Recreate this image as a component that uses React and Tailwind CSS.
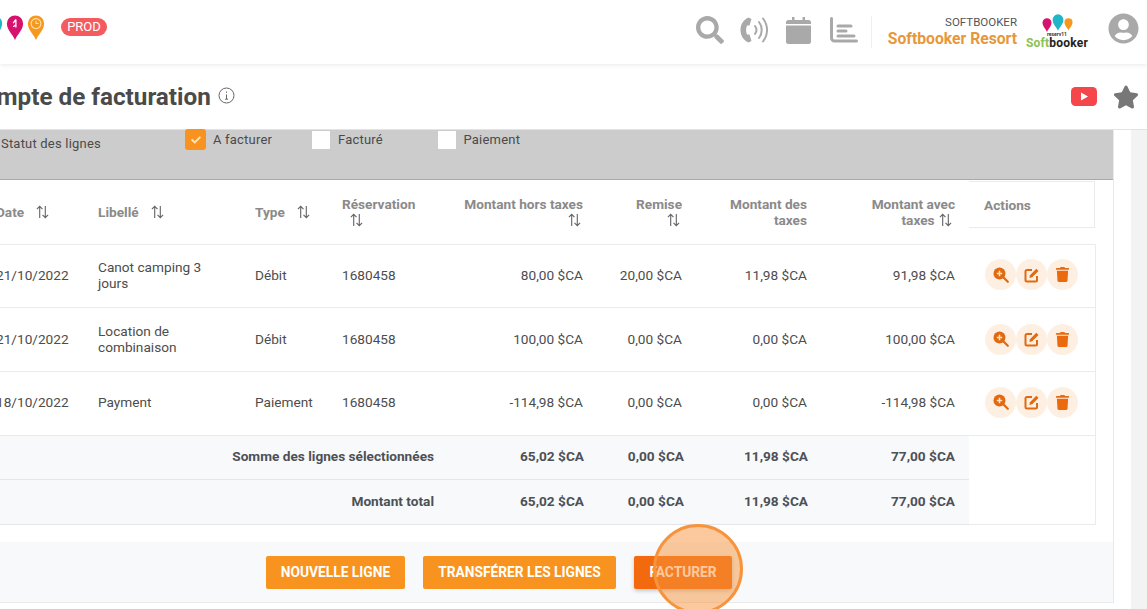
import React from "react";
import { FaSearch, FaUserCircle, FaStar, FaTrash, FaCheck } from "react-icons/fa";

const rows = [
  { date: "21/10/2022", label: "Canot camping 3 jours", type: "Débit", resa: "1680458", ht: "80,00 $CA", remise: "20,00 $CA", taxes: "11,98 $CA", ttc: "91,98 $CA", h: "h-[63px] [&>td]:pb-[2px]" },
  { date: "21/10/2022", label: "Location de combinaison", type: "Débit", resa: "1680458", ht: "100,00 $CA", remise: "0,00 $CA", taxes: "0,00 $CA", ttc: "100,00 $CA", h: "h-[64px]" },
  { date: "18/10/2022", label: "Payment", type: "Paiement", resa: "1680458", ht: "-114,98 $CA", remise: "0,00 $CA", taxes: "0,00 $CA", ttc: "-114,98 $CA", h: "h-[64px] [&>td]:pb-[2px]" },
];

const totals = [
  { label: "Somme des lignes sélectionnées", h: "h-[44px] [&>td]:pb-[2px]", last: "" },
  { label: "Montant total", h: "h-[45px]", last: "border-b" },
];

// map pin used in the logo
const Pin = ({ color, size = 18, className = "", children }) => (
  <svg width={size} height={size * 1.4} viewBox="0 0 20 28" className={className}>
    <path d="M10 28 C8 22 1 17 1 9.5 A9 9 0 0 1 19 9.5 C19 17 12 22 10 28Z" fill={color} />
    {children}
  </svg>
);

const SortIcon = ({ className = "" }) => (
  <svg width="15" height="14" viewBox="0 0 15 15" fill="none" stroke="#666" strokeWidth="1.2" className={`inline-block align-[-2px] ${className}`}>
    <path d="M4.5 14V1.5M1.5 4.5l3-3 3 3" />
    <path d="M10.5 1v12.5M7.5 10.5l3 3 3-3" />
  </svg>
);

const ActionButton = ({ children }) => (
  <button className="w-[31px] h-[31px] rounded-full bg-[#fdf0e2] flex items-center justify-center text-[#ec6a0e] text-[15px]">
    {children}
  </button>
);

const ZoomIcon = () => (
  <svg width="16" height="16" viewBox="0 0 16 16">
    <circle cx="6.5" cy="6.5" r="6" fill="#e2690f" />
    <path d="M6.5 3.8v5.4M3.8 6.5h5.4" stroke="#fde3c8" strokeWidth="1.5" />
    <path d="M10.8 10.8l4 4" stroke="#e2690f" strokeWidth="2.2" strokeLinecap="round" />
  </svg>
);

const EditIcon = () => (
  <svg width="16" height="16" viewBox="0 0 16 16" fill="none">
    <path d="M8 3H3a1.5 1.5 0 0 0-1.5 1.5v8.5A1.5 1.5 0 0 0 3 14.500h8.500a1.500 1.500 0 0 0 1.500-1.500V9" stroke="#e2690f" strokeWidth="2" />
    <path d="M6 8.200l6.300-6.400 2.200 2.200-6.300 6.300-2.800.6z" fill="#e2690f" />
  </svg>
);

const Check = ({ label, checked, className = "" }) => (
  <div className={`flex items-center ${className}`}>
    {checked ? (
      <span className="w-[21px] h-[21px] mr-[7px] rounded-[3px] flex items-center justify-center bg-[#f7931e]">
        <FaCheck className="text-[#ffe3bd] text-[10px]" />
      </span>
    ) : (
      <span className="w-[18px] h-[18px] mt-[1px] mr-[8px] bg-white" />
    )}
    <span className="text-[13px] text-[#4a4a4a] tracking-[0.2px]">{label}</span>
  </div>
);

const Th = ({ children, className = "" }) => (
  <th className={`text-[13.65px] leading-[16px] font-bold text-[#8a8a8a] align-middle ${className}`}>{children}</th>
);

const App = () => {
  return (
    <div className="w-[1147px] h-[609px] overflow-hidden bg-white flex flex-col font-['Roboto',sans-serif] text-[#4d4d4d]">
      {/* top bar */}
      <header className="h-[64px] shrink-0 flex items-center bg-white shadow-[0_1px_5px_rgba(0,0,0,0.09)] relative z-10">
        <div className="flex items-center gap-[3px] -ml-[15px] mt-[-9px]">
          <Pin color="#21b5c8" />
          <Pin color="#d6126e">
            <path d="M11 5v9M11 5l-3 4M8 13l3-2" stroke="#fff" strokeWidth="1.4" fill="none" />
          </Pin>
          <Pin color="#f7981d">
            <circle cx="10" cy="9.5" r="5.5" fill="none" stroke="#fde2bb" strokeWidth="1.2" />
            <path d="M10 6.5v3h3" fill="none" stroke="#fde2bb" strokeWidth="1.2" />
          </Pin>
        </div>
        <span className="ml-[16px] mt-[-11px] h-[18px] w-[46px] rounded-full bg-[#f45b5f] text-white text-[13px] leading-[18px] text-center">PROD</span>
        <div className="ml-auto flex items-center text-[#a9a9a9] mt-[-4px]">
          <FaSearch className="text-[28px]" />
          <svg width="29" height="28" viewBox="0 0 29 28" fill="none" className="ml-[16px]">
            <path d="M8.500 1.500 C3 4 0.500 9 0.500 14 C0.500 19 3 24 8.500 26.500 L11.500 25 L9.500 18.500 L7 18.500 C5.800 15.500 5.800 12.500 7 9.500 L9.500 9.500 L11.500 3 Z" fill="#a9a9a9" />
            <path d="M15 10c1.800 2.400 1.800 5.600 0 8" stroke="#a9a9a9" strokeWidth="2" strokeLinecap="round" />
            <path d="M19 6c3.600 4.600 3.600 11.400 0 16" stroke="#a9a9a9" strokeWidth="2" strokeLinecap="round" />
            <path d="M23 2.500c5.400 7 5.400 16 0 23" stroke="#a9a9a9" strokeWidth="2" strokeLinecap="round" />
          </svg>
          <svg width="25" height="27" viewBox="0 0 25 27" className="ml-[17px]">
            <path d="M6 0h2.500v3H16.500V0H19v3h3.500A2.500 2.500 0 0 1 25 5.500V7H0V5.500A2.500 2.500 0 0 1 2.500 3H6Z" fill="#a9a9a9" />
            <path d="M0 8.500h25V24.500A2.500 2.500 0 0 1 22.500 27H2.500A2.500 2.500 0 0 1 0 24.500Z" fill="#a9a9a9" />
          </svg>
          <svg width="28" height="26" viewBox="0 0 28 26" fill="none" stroke="#a9a9a9" strokeWidth="3" strokeLinecap="round" className="ml-[19px]">
            <path d="M1.500 1.500V21a3 3 0 0 0 3 3h22" />
            <path d="M8 9h13M8 14h8M8 19h16" />
          </svg>
          <div className="w-px h-[32px] bg-[#eeeeee] ml-[13px] mt-[3px]" />
          <div className="w-[145px] text-right mr-[9px] mt-[4px]">
            <div className="text-[11.5px] leading-[14px] text-[#555] mb-[1px] mt-[-2px]">SOFTBOOKER</div>
            <div className="text-[15.7px] leading-[18px] font-bold text-[#e8973a] whitespace-nowrap">Softbooker Resort</div>
          </div>
          <div className="w-[62px] flex flex-col items-center mt-[2px]">
            <div className="flex items-start h-[19px] pt-[2px]">
              <Pin color="#d6126e" size={10} className="mt-[4px]" />
              <Pin color="#21b5c8" size={12} />
              <Pin color="#f7981d" size={9} className="mt-[4px]" />
            </div>
            <div className="text-[5px] leading-[6px] font-bold text-[#333]">reserv11</div>
            <div className="text-[12px] leading-[13px] font-bold tracking-[0.2px] whitespace-nowrap text-[#222]">
              <span className="text-[#8cc152]">Soft</span>booker
            </div>
          </div>
          <FaUserCircle className="text-[31px] ml-[20px] mr-[8px] mt-[-3px]" />
        </div>
      </header>

      {/* title */}
      <div className="h-[66px] shrink-0 flex items-center border-b border-[#e3e3e3] bg-white">
        <h1 className="text-[24.25px] leading-[30px] font-bold text-[#4a4a4a] whitespace-nowrap -ml-[33px] flex items-center">
          Compte de facturation
          <svg width="17" height="17" viewBox="0 0 17 17" fill="none" stroke="#666" className="ml-[7px] mt-[-3px]">
            <circle cx="8.500" cy="8.500" r="7.500" />
            <path d="M8.500 7.500v4.500M8.500 4.500v1.300M7 12.200h3" />
          </svg>
        </h1>
        <div className="ml-auto flex items-center mr-[8px]">
          <svg width="26" height="19" viewBox="0 0 26 19">
            <rect width="26" height="19" rx="4.500" fill="#f5474b" />
            <path d="M10 5.500v8l7-4z" fill="#fff" />
          </svg>
          <FaStar className="text-[26px] text-[#777] ml-[16px]" />
        </div>
      </div>

      {/* body */}
      <div className="flex flex-1 min-h-0">
        <main className="w-[1114px] h-[473px] shrink-0 bg-white border-r border-b border-[#e9e9e9] flex flex-col">
          <div className="h-[50px] shrink-0 bg-[#cccccc] border-b border-[#a9a9a9] flex items-start">
            <span className="w-[185px] pl-[1px] pt-[5px] text-[13px] leading-[18px] text-[#4a4a4a] tracking-[0.2px]">Statut des lignes</span>
            <div className="flex h-[21px] items-center -mt-[1px]">
              <Check label="A facturer" checked className="w-[127px]" />
              <Check label="Facturé" className="w-[125.500px]" />
              <Check label="Paiement" />
            </div>
          </div>

          <table className="table-fixed border-collapse w-[1095px] mt-[1px] text-[13.65px]">
            <colgroup>
              <col className="w-[98px]" />
              <col className="w-[157px]" />
              <col className="w-[87px]" />
              <col className="w-[98px]" />
              <col className="w-[159px]" />
              <col className="w-[99px]" />
              <col className="w-[125px]" />
              <col className="w-[146px]" />
              <col className="w-[126px]" />
            </colgroup>
            <thead>
              <tr className="h-[63px] border-b border-[#ebebeb]">
                <Th className="text-left whitespace-nowrap"><span className="-ml-[4px]">Date</span><span className="ml-[11px]"><SortIcon /></span></Th>
                <Th className="text-left"><span>Libellé</span><span className="ml-[11px]"><SortIcon /></span></Th>
                <Th className="text-left"><span>Type</span><span className="ml-[11px]"><SortIcon /></span></Th>
                <Th className="text-left">Réservation<br /><span className="ml-[7px]"><SortIcon /></span></Th>
                <Th className="text-right pr-[16px]">Montant hors taxes<br /><SortIcon className="mr-[1px]" /></Th>
                <Th className="text-right pr-[16px]">Remise<br /><SortIcon className="mr-[1px]" /></Th>
                <Th className="text-right pr-[16px]">Montant des<br />taxes</Th>
                <Th className="text-right pr-[14px]">Montant avec<br />taxes <SortIcon className="mr-[2px]" /></Th>
                <th className="align-top p-0">
                  <div className="h-[47px] pt-[2px] border-t border-r border-b border-[#ebebeb] flex items-center pl-[15px] text-[13.65px] font-bold text-[#8a8a8a]">Actions</div>
                </th>
              </tr>
            </thead>
            <tbody>
              {rows.map((row, idx) => (
                <tr key={idx} className={`${row.h} border-b border-[#ebebeb] text-[#4d4d4d] leading-[16px]`}>
                  <td><span className="-ml-[4px] block whitespace-nowrap">{row.date}</span></td>
                  <td className="pr-[40px]">{row.label}</td>
                  <td>{row.type}</td>
                  <td>{row.resa}</td>
                  <td className="text-right pr-[16px]">{row.ht}</td>
                  <td className="text-right pr-[16px]">{row.remise}</td>
                  <td className="text-right pr-[16px]">{row.taxes}</td>
                  <td className="text-right pr-[14px]">{row.ttc}</td>
                  <td className="border-r border-[#ebebeb] pl-[16px]">
                    <div className="flex">
                      <ActionButton><ZoomIcon /></ActionButton>
                      <ActionButton><EditIcon /></ActionButton>
                      <ActionButton><FaTrash /></ActionButton>
                    </div>
                  </td>
                </tr>
              ))}
              {totals.map((total) => (
                <tr key={total.label} className={`${total.h} font-bold text-[#4d5156]`}>
                  <td colSpan={4} className="bg-[#f8f9fa] border-b border-[#e4e6e8] text-right pr-[6px]">{total.label}</td>
                  <td className="bg-[#f8f9fa] border-b border-[#e4e6e8] text-right pr-[15px]">65,02 $CA</td>
                  <td className="bg-[#f8f9fa] border-b border-[#e4e6e8] text-right pr-[14px]">0,00 $CA</td>
                  <td className="bg-[#f8f9fa] border-b border-[#e4e6e8] text-right pr-[15px]">11,98 $CA</td>
                  <td className="bg-[#f8f9fa] border-b border-[#e4e6e8] text-right pr-[14px]">77,00 $CA</td>
                  <td className={`bg-white border-r border-[#ebebeb] ${total.last}`} />
                </tr>
              ))}
            </tbody>
          </table>

          <footer className="mt-auto h-[60px] bg-[#f8f9fa] flex items-center relative">
            <div className="flex items-center ml-[266px]">
              <button className="h-[33px] w-[139px] rounded-[2px] bg-[#f7931e] text-white text-[13.75px] font-bold">NOUVELLE LIGNE</button>
              <button className="h-[33px] w-[193px] ml-[18px] rounded-[2px] bg-[#f7931e] text-white text-[13.75px] font-bold">TRANSFÉRER LES LIGNES</button>
              <button className="h-[33px] w-[98px] ml-[18px] rounded-[2px] bg-[#f36a0e] text-white text-[13.75px] font-bold shadow-[0_2px_4px_rgba(0,0,0,0.2)]">FACTURER</button>
            </div>
            {/* click highlight over the button */}
            <div className="absolute left-[653px] top-[-18px] w-[90px] h-[90px] rounded-full border-[3px] border-[#f7933b] bg-[#f7933b]/50" />
          </footer>
        </main>
        <div className="w-[17px] shrink-0 bg-white" />
        <div className="flex-1 bg-[#f3f3f3]" />
      </div>
    </div>
  );
};

export default App;
